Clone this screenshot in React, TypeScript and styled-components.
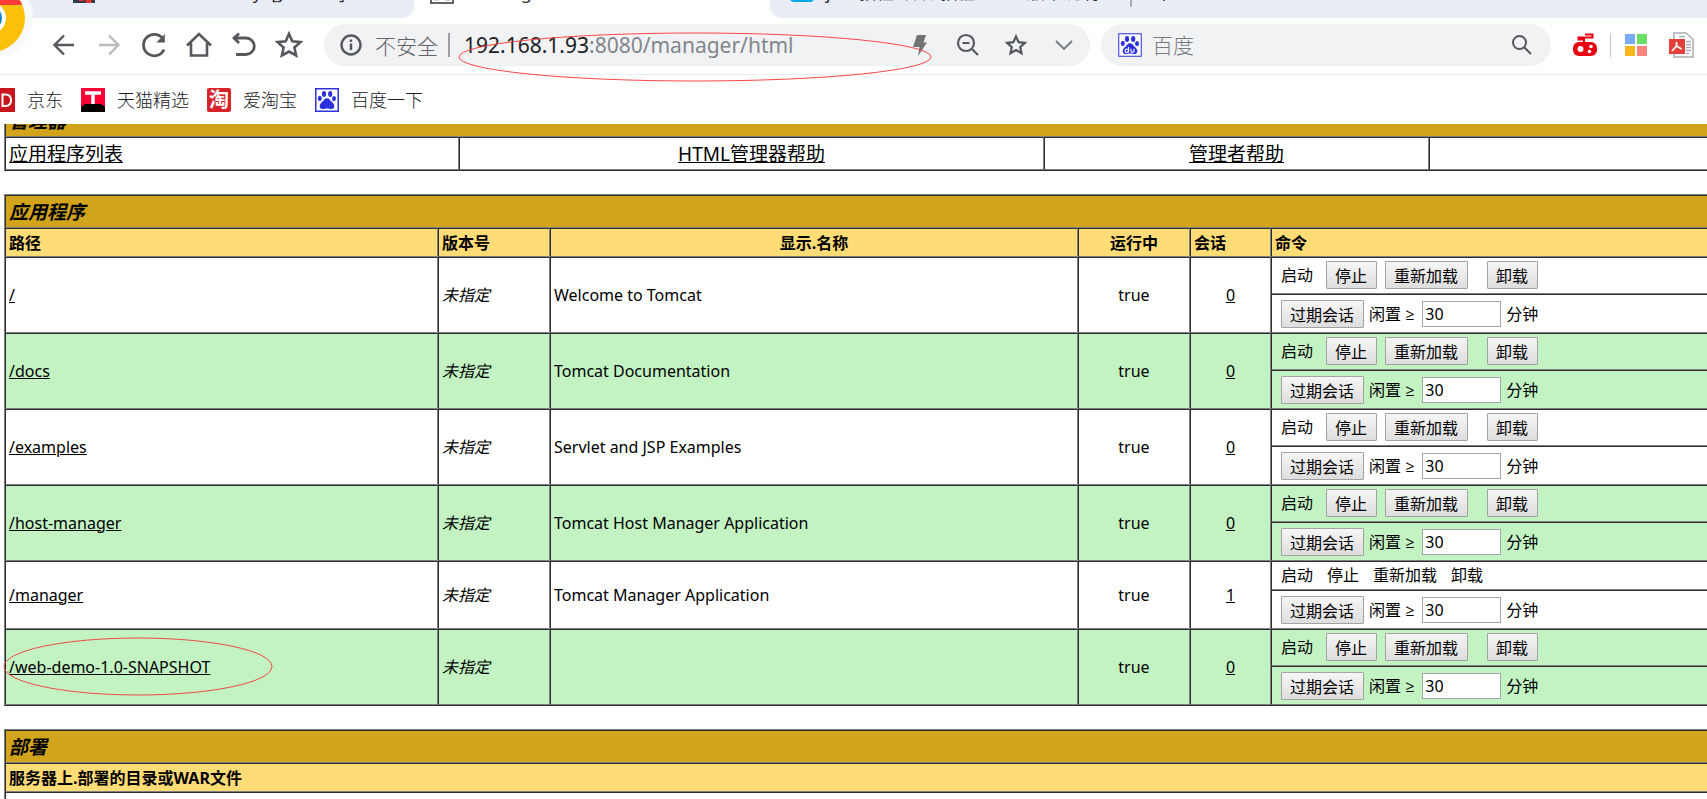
import React from "react";
import styled, { createGlobalStyle } from "styled-components";

const Global = createGlobalStyle`
  *, *::before, *::after { box-sizing: border-box; }
  body {
    margin: 0;
    background: #fff;
    color: #000;
    font-family: "Noto Sans", "Open Sans", "Noto Sans CJK SC", sans-serif;
    overflow: hidden;
  }
  a { color: inherit; }
`;

const Window = styled.div`
  position: relative;
  display: flex;
  flex-direction: column;
  height: 100vh;
  overflow: hidden;
`;

/* ---------- browser chrome ---------- */

const TabStrip = styled.div`
  display: flex;
  flex: none;
  align-items: flex-end;
  height: 18px;
  background: #e9edf5;
  overflow: hidden;
`;

const TabSlot = styled.div<{ $width: number; $active?: boolean }>`
  flex: 0 0 ${(p) => p.$width}px;
  height: 44px;
  background: ${(p) => (p.$active ? "#e9edf5" : "#fff")};
`;

const Tab = styled.div<{ $active?: boolean; $last?: boolean; $indent: number }>`
  display: flex;
  align-items: center;
  gap: 12px;
  height: 44px;
  padding: 0 0 8px ${(p) => p.$indent}px;
  background: ${(p) => (p.$active ? "#fff" : "#e9edf5")};
  border-radius: ${(p) => (p.$active ? "0" : p.$last ? "0 0 0 12px" : "0 0 12px 0")};
  font-size: 18px;
  line-height: 30px;
  color: #333;
  white-space: pre;
  overflow: hidden;
`;

const TabRule = styled.span`
  width: 2px;
  height: 22px;
  margin-bottom: 11px;
  background: #a8abb0;
`;

const NewTab = styled.button`
  width: 24px;
  height: 24px;
  margin: 0 0 15px 20px;
  padding: 0;
  border: 0;
  background: none;
`;

const Toolbar = styled.div`
  display: flex;
  flex: none;
  align-items: center;
  height: 57px;
  padding: 0 12px 2px 50px;
  border-bottom: 1px solid #ebecee;
  background: #fff;
`;

const NavButtons = styled.div`
  display: flex;
  gap: 17px;
  margin-right: 21px;
`;

const IconButton = styled.button`
  display: grid;
  place-items: center;
  width: 28px;
  height: 28px;
  padding: 0;
  border: 0;
  background: none;
  color: #5f6368;
  svg { display: block; }
`;

const AddressBar = styled.div`
  display: flex;
  flex: 741 1 0;
  align-items: center;
  height: 42px;
  padding: 0 12px 0 13px;
  border-radius: 21px;
  background: #f1f2f4;
  font-size: 21px;
  color: #5f6368;
`;

const Insecure = styled.span`
  margin-left: 10px;
  font-weight: 300;
  white-space: nowrap;
`;

const AddressRule = styled.span`
  width: 2px;
  height: 24px;
  margin: 0 14px 0 10px;
  background: #9a9da1;
`;

const Url = styled.a`
  flex: 1;
  font-family: "Noto Sans", sans-serif;
  font-size: 21px;
  line-height: 30px;
  color: #80868b;
  text-decoration: none;
  white-space: nowrap;
  b { font-weight: 400; color: #202124; }
`;

const AddressActions = styled.div`
  display: flex;
  gap: 20px;
`;

const SearchBar = styled.label`
  display: flex;
  flex: 418 1 0;
  align-items: center;
  gap: 10px;
  height: 42px;
  margin: 0 20px 0 11px;
  padding: 0 15px 0 17px;
  border-radius: 21px;
  background: #f1f2f4;
`;

const SearchInput = styled.input`
  flex: 1;
  min-width: 0;
  padding: 0 0 2px;
  border: 0;
  background: none;
  font: 300 21px/30px "Noto Sans CJK SC", sans-serif;
  outline: none;
  &::placeholder { color: #777b80; opacity: 1; }
`;

const Extensions = styled.div`
  display: flex;
  align-items: center;
  gap: 11px;
`;

const ExtensionGroup = styled.div`
  display: flex;
  gap: 17px;
`;

const ExtensionRule = styled.span`
  width: 1px;
  height: 24px;
  background: #c4c6c9;
`;

const Bookmarks = styled.nav`
  display: flex;
  flex: none;
  align-items: center;
  gap: 18px;
  height: 49px;
  background: #fff;
`;

const Bookmark = styled.a<{ $clipped?: boolean }>`
  display: flex;
  align-items: center;
  gap: 12px;
  margin-left: ${(p) => (p.$clipped ? "-9px" : "0")};
  font-size: 18px;
  font-weight: 300;
  line-height: 26px;
  color: #202124;
  text-decoration: none;
`;

/* ---------- page ---------- */

const Viewport = styled.div`
  flex: 1;
  min-height: 0;
  overflow: hidden;
`;

const Page = styled.main`
  display: flex;
  flex-direction: column;
  gap: 23px;
  width: calc(100% + 40px);
  margin-top: -21px;
  padding-left: 4px;
`;

const DataTable = styled.table`
  width: 100%;
  table-layout: fixed;
  border-collapse: separate;
  border-spacing: 0;
  border: 1px solid;
  border-color: #808080 #2c2c2c #2c2c2c #808080;
  font-size: 16px;
  line-height: 21px;
`;

const Cell = styled.td<{ $center?: boolean; $large?: boolean }>`
  padding: ${(p) => (p.$large ? "4px 3px 2px" : "3px")};
  border: 1px solid;
  border-color: #2c2c2c #808080 #808080 #2c2c2c;
  text-align: ${(p) => (p.$center ? "center" : "left")};
  font-size: ${(p) => (p.$large ? "19px" : "16px")};
  line-height: ${(p) => (p.$large ? "25px" : "21px")};
  font-weight: 400;
`;

const TitleCell = styled(Cell).attrs({ as: "th", $large: true })`
  background: #d2a41c;
  font-weight: 700;
  font-style: italic;
`;

const HeadCell = styled(Cell).attrs({ as: "th" })`
  padding: 4px 3px 2px;
  background: #ffdc75;
  font-weight: 700;
`;

const Row = styled.tr<{ $shaded?: boolean }>`
  background: ${(p) => (p.$shaded ? "#c3f3c3" : "#fff")};
`;

const CommandCell = styled(Cell)`
  padding: 3px 3px 3px 9px;
`;

const Commands = styled.div<{ $plain?: boolean }>`
  display: flex;
  align-items: center;
  gap: ${(p) => (p.$plain ? "14px" : "8px")};
  height: ${(p) => (p.$plain ? "21px" : "29px")};
  padding-bottom: ${(p) => (p.$plain ? "0" : "1px")};
`;

const StartLabel = styled.span`
  margin-right: 5px;
`;

const Spacer = styled.span`
  width: 3px;
`;

const ExpireForm = styled.form`
  display: flex;
  align-items: center;
  gap: 5px;
  height: 31px;
  padding-top: 1px;
`;

const IdleLabel = styled.label`
  display: flex;
  align-items: center;
  gap: 5px;
`;

const PushButton = styled.button`
  height: 28px;
  padding: 1px 9px 0 8px;
  border: 1px solid #a3a3a3;
  border-radius: 1px;
  background: linear-gradient(#f6f6f6, #dddddd);
  font: inherit;
  line-height: 24px;
  color: #000;
  white-space: nowrap;
`;

const IdleInput = styled.input`
  width: 79px;
  height: 26px;
  margin-left: 3px;
  padding: 0 2px;
  border: 1px solid #a6a6a6;
  background: #fff;
  font: inherit;
  line-height: 24px;
  color: #000;
`;

const Mark = styled.svg<{ $left: number; $top: number }>`
  position: absolute;
  left: ${(p) => p.$left}px;
  top: ${(p) => p.$top}px;
  pointer-events: none;
`;

/* ---------- icons ---------- */

const Line = ({ children, size = 28, width = 2.4, color = "#55585c" }: { children: React.ReactNode; size?: number; width?: number; color?: string }) => (
  <svg width={size} height={size} viewBox="0 0 28 28" fill="none" stroke={color} strokeWidth={width}>{children}</svg>
);

const Paw = ({ du }: { du?: boolean }) => (
  <svg width="24" height="24" viewBox="0 0 24 24">
    <rect x="0.75" y="0.75" width="22.5" height="22.5" fill="#fff" stroke="#2b32dc" strokeWidth={du ? 1 : 1.5} />
    <g fill="#2b32dc">
      <ellipse cx="9" cy="6" rx="2.1" ry="2.9" />
      <ellipse cx="15.2" cy="6" rx="2.1" ry="2.9" />
      <ellipse cx="4.8" cy="10.4" rx="2" ry="2.6" />
      <ellipse cx="19" cy="10.6" rx="2" ry="2.6" />
      <path d="M12 10.200c2.200 0 3 1.800 4.400 3.300 1.500 1.500 3.200 2.600 2.900 4.900-.3 2.200-2.300 2.900-4.300 2.500-2-.4-4-.4-6 0s-4-.3-4.300-2.500c-.3-2.300 1.400-3.400 2.900-4.900 1.400-1.500 2.200-3.300 4.400-3.300z" />
    </g>
    {du && <path d="M10.500 14v5.300M10.500 17.700a1.700 1.700 0 1 1-3.400 0 1.700 1.700 0 0 1 3.400 0M13 15.800v2.100q0 1.500 1.500 1.500t1.500-1.500v-2.100" fill="none" stroke="#fff" strokeWidth="1.200" />}
  </svg>
);

const BrowserLogo = () => (
  <Mark $left={0} $top={0} width="34" height="56" viewBox="0 0 34 56">
    <circle cx="-9" cy="18" r="42" fill="#f8f9fc" />
    <circle cx="-9" cy="18" r="34" fill="#fbc108" />
    <path d="M0 0h19q3 2 3 5H0z" fill="#fb3b3a" />
    <circle cx="-10" cy="18" r="16" fill="#fff" />
    <circle cx="-10" cy="18" r="12" fill="#1583c6" />
  </Mark>
);

/* ---------- data ---------- */

type App = { path: string; name: string; sessions: number; fixed?: boolean };

const apps: App[] = [
  { path: "/", name: "Welcome to Tomcat", sessions: 0 },
  { path: "/docs", name: "Tomcat Documentation", sessions: 0 },
  { path: "/examples", name: "Servlet and JSP Examples", sessions: 0 },
  { path: "/host-manager", name: "Tomcat Host Manager Application", sessions: 0 },
  { path: "/manager", name: "Tomcat Manager Application", sessions: 1, fixed: true },
  { path: "/web-demo-1.0-SNAPSHOT", name: "", sessions: 0 },
];

const AppRows = ({ app, shaded }: { app: App; shaded: boolean }) => (
  <>
    <Row $shaded={shaded}>
      <Cell rowSpan={2}><a href="#app">{app.path}</a></Cell>
      <Cell rowSpan={2}><i>未指定</i></Cell>
      <Cell rowSpan={2}>{app.name}</Cell>
      <Cell rowSpan={2} $center>true</Cell>
      <Cell rowSpan={2} $center><a href="#sessions">{app.sessions}</a></Cell>
      <CommandCell>
        {app.fixed ? (
          <Commands $plain>
            <span>启动</span><span>停止</span><span>重新加载</span><span>卸载</span>
          </Commands>
        ) : (
          <Commands>
            <StartLabel>启动</StartLabel>
            <PushButton type="button">停止</PushButton>
            <PushButton type="button">重新加载</PushButton>
            <Spacer />
            <PushButton type="button">卸载</PushButton>
          </Commands>
        )}
      </CommandCell>
    </Row>
    <Row $shaded={shaded}>
      <CommandCell>
        <ExpireForm>
          <PushButton type="button">过期会话</PushButton>
          <IdleLabel>闲置 ≥ <IdleInput type="text" defaultValue="30" /> 分钟</IdleLabel>
        </ExpireForm>
      </CommandCell>
    </Row>
  </>
);

export default function App() {
  return (
    <Window>
      <Global />
      <TabStrip>
        <TabSlot $width={414}>
          <Tab $indent={73}>
            <svg width="22" height="22" viewBox="0 0 22 22"><path d="M0 14h22v8H0z" fill="#2e3c4c" /><path d="M5 20l4-3 2 3zM12 18h6l1 4h-6z" fill="#e5322d" /></svg>
            <span>web-demo-factory  [Jenkins]</span>
          </Tab>
        </TabSlot>
        <TabSlot $width={356} $active>
          <Tab $indent={16} $active>
            <svg width="24" height="24" viewBox="0 0 24 24"><path d="M1 0v23h22V0" fill="#fff" stroke="#333" strokeWidth="1.500" /><path d="M4 20h5M15 20h5" stroke="#aaa" /></svg>
            <span>/manager</span>
          </Tab>
        </TabSlot>
        <TabSlot $width={360}>
          <Tab $indent={20} $last>
            <svg width="24" height="24" viewBox="0 0 24 24"><rect width="24" height="22" rx="4" fill="#00a8e8" /></svg>
            <span>js    教程 认识 教程           版本说明</span>
          </Tab>
        </TabSlot>
        <TabRule />
        <NewTab aria-label="新标签页"><svg width="24" height="24" viewBox="0 0 24 24"><path d="M12 2v20M2 12h20" stroke="#55585c" strokeWidth="2" /></svg></NewTab>
      </TabStrip>
      <Toolbar>
        <NavButtons>
          <IconButton aria-label="后退"><Line><path d="M24 14H5M14 4.500L4.500 14l9.500 9.500" /></Line></IconButton>
          <IconButton aria-label="前进"><Line color="#b9bbbd"><path d="M4 14h19M14 4.500l9.500 9.500-9.500 9.500" /></Line></IconButton>
          <IconButton aria-label="刷新"><Line width={2.8}><path d="M24 18.500A10.700 10.700 0 1 1 23 8" /><path d="M24.800 3v8.500h-8.500z" fill="#55585c" stroke="none" /></Line></IconButton>
          <IconButton aria-label="主页"><Line width={2.6}><path d="M2 14.500L14 3l12 11.500M6 12v12.500h16V12" /></Line></IconButton>
          <IconButton aria-label="恢复"><Line width={2.8}><path d="M9 2.500L4 7l5 5M4.500 7H16a8 8 0 0 1 0 16.500H6" /></Line></IconButton>
          <IconButton aria-label="收藏"><Line width={2.6}><path d="M14 2.800l3.300 7.400 8.100.9-6 5.400 1.700 8-7.100-4-7.100 4 1.700-8-6-5.400 8.100-.9z" /></Line></IconButton>
        </NavButtons>
        <AddressBar>
          <Line width={2.4}><circle cx="14" cy="14" r="9.500" /><path d="M14 12.500v6.500M14 8.500v2.500" /></Line>
          <Insecure>不安全</Insecure>
          <AddressRule />
          <Url href="#manager"><b>192.168.1.93</b>:8080/manager/html</Url>
          <AddressActions>
            <IconButton aria-label="加速"><svg width="28" height="28" viewBox="0 0 28 28"><path d="M11 4h9l-2.500 7.500H21L12 25l1.500-9H7z" fill="#707274" /></svg></IconButton>
            <IconButton aria-label="缩小"><Line width={2.2}><circle cx="12" cy="12" r="8" /><path d="M18 18l6 6M8.500 12h7" /></Line></IconButton>
            <IconButton aria-label="添加书签"><Line width={2.2}><path d="M14 5.500l2.600 5.700 6.300.7-4.700 4.200 1.300 6.200-5.500-3.200-5.500 3.200 1.300-6.200-4.700-4.200 6.300-.7z" /></Line></IconButton>
            <IconButton aria-label="展开"><Line width={1.8} color="#777b80"><path d="M6 10l8 8 8-8" /></Line></IconButton>
          </AddressActions>
        </AddressBar>
        <SearchBar>
          <Paw du />
          <SearchInput type="text" placeholder="百度" aria-label="百度" />
          <IconButton type="button" aria-label="搜索"><Line width={2}><circle cx="11.500" cy="11.500" r="6.500" /><path d="M16 16l7 7" /></Line></IconButton>
        </SearchBar>
        <Extensions>
          <IconButton aria-label="游戏">
            <svg width="26" height="26" viewBox="0 0 26 26"><path d="M12 11V7.500H6.500V5.500h14V2.500H13" fill="none" stroke="#e60012" strokeWidth="2" /><rect x="1" y="10" width="24" height="14" rx="6" fill="#e60012" /><circle cx="8.500" cy="17" r="3" fill="#fff" /><circle cx="19" cy="14.500" r="1.800" fill="#fff" /><circle cx="17.500" cy="19.500" r="1.800" fill="#fff" /></svg>
          </IconButton>
          <ExtensionRule />
          <ExtensionGroup>
            <IconButton aria-label="应用">
              <svg width="22" height="22" viewBox="0 0 22 22"><path d="M0 0h10v10H0z" fill="#7baaf7" /><path d="M12 0h10v10H12z" fill="#6bdc66" /><path d="M0 12h10v10H0z" fill="#f9b61c" /><path d="M12 12h10v10H12z" fill="#f9837c" /></svg>
            </IconButton>
            <IconButton aria-label="PDF">
              <svg width="26" height="26" viewBox="0 0 26 26"><path d="M6 1h12l7 6.500V25H6z" fill="#fff" stroke="#aaadb2" strokeWidth="1.500" /><path d="M11 4.500h6M18 9.500h5M18 12.500h5M18 15.500h5M18 18.500h5M18 21.500h3" stroke="#aaadb2" strokeWidth="1.300" /><path d="M1 7h16v15H1z" fill="#e5403b" /><path d="M8.500 10v4l-4.500 5M8.500 14l5 3" fill="none" stroke="#fff" strokeWidth="1.800" /></svg>
            </IconButton>
          </ExtensionGroup>
        </Extensions>
      </Toolbar>
      <Bookmarks>
        <Bookmark href="#jd" $clipped>
          <svg width="24" height="24" viewBox="0 0 24 24"><rect width="24" height="24" fill="#c8161e" /><path d="M11.500 6.500h3q5.500 0 5.500 5.700t-5.500 5.700h-3z" fill="none" stroke="#fff" strokeWidth="2" /></svg>
          京东
        </Bookmark>
        <Bookmark href="#tmall">
          <svg width="24" height="24" viewBox="0 0 24 24"><rect width="24" height="24" fill="#000" /><path d="M0 0h24v19l-4-3H4l-4 3z" fill="#ff0036" /><path d="M4 5h16M12 5v11" stroke="#fff" strokeWidth="3.500" /></svg>
          天猫精选
        </Bookmark>
        <Bookmark href="#taobao">
          <svg width="24" height="24" viewBox="0 0 24 24"><rect width="24" height="24" rx="2" fill="#d8232a" /><text x="12" y="19" textAnchor="middle" fontSize="20" fontWeight="700" fill="#fff">淘</text></svg>
          爱淘宝
        </Bookmark>
        <Bookmark href="#baidu"><Paw />百度一下</Bookmark>
      </Bookmarks>
      <Viewport>
        <Page>
          <DataTable>
            <colgroup><col width="454" /><col width="585" /><col width="385" /><col /></colgroup>
            <tbody>
              <tr><TitleCell colSpan={4}>管理器</TitleCell></tr>
              <tr>
                <Cell $large><a href="#list">应用程序列表</a></Cell>
                <Cell $large $center><a href="#html-help">HTML管理器帮助</a></Cell>
                <Cell $large $center><a href="#help">管理者帮助</a></Cell>
                <Cell $large />
              </tr>
            </tbody>
          </DataTable>
          <DataTable>
            <colgroup><col width="433" /><col width="112" /><col width="528" /><col width="112" /><col width="81" /><col /></colgroup>
            <tbody>
              <tr><TitleCell colSpan={6}>应用程序</TitleCell></tr>
              <tr>
                <HeadCell>路径</HeadCell>
                <HeadCell>版本号</HeadCell>
                <HeadCell $center>显示.名称</HeadCell>
                <HeadCell $center>运行中</HeadCell>
                <HeadCell>会话</HeadCell>
                <HeadCell>命令</HeadCell>
              </tr>
              {apps.map((app, i) => <AppRows key={app.path} app={app} shaded={i % 2 === 1} />)}
            </tbody>
          </DataTable>
          <DataTable>
            <tbody>
              <tr><TitleCell>部署</TitleCell></tr>
              <tr><HeadCell>服务器上.部署的目录或WAR文件</HeadCell></tr>
              <tr><Cell>&nbsp;</Cell></tr>
            </tbody>
          </DataTable>
        </Page>
      </Viewport>
      <BrowserLogo />
      <Mark $left={458} $top={32} width="474" height="50" viewBox="0 0 474 50">
        <ellipse cx="237" cy="25" rx="236" ry="24" fill="none" stroke="#fb4747" />
      </Mark>
      <Mark $left={3} $top={637} width="270" height="59" viewBox="0 0 270 59">
        <ellipse cx="135" cy="29.500" rx="134" ry="28.500" fill="none" stroke="#ee4a44" />
      </Mark>
    </Window>
  );
}
